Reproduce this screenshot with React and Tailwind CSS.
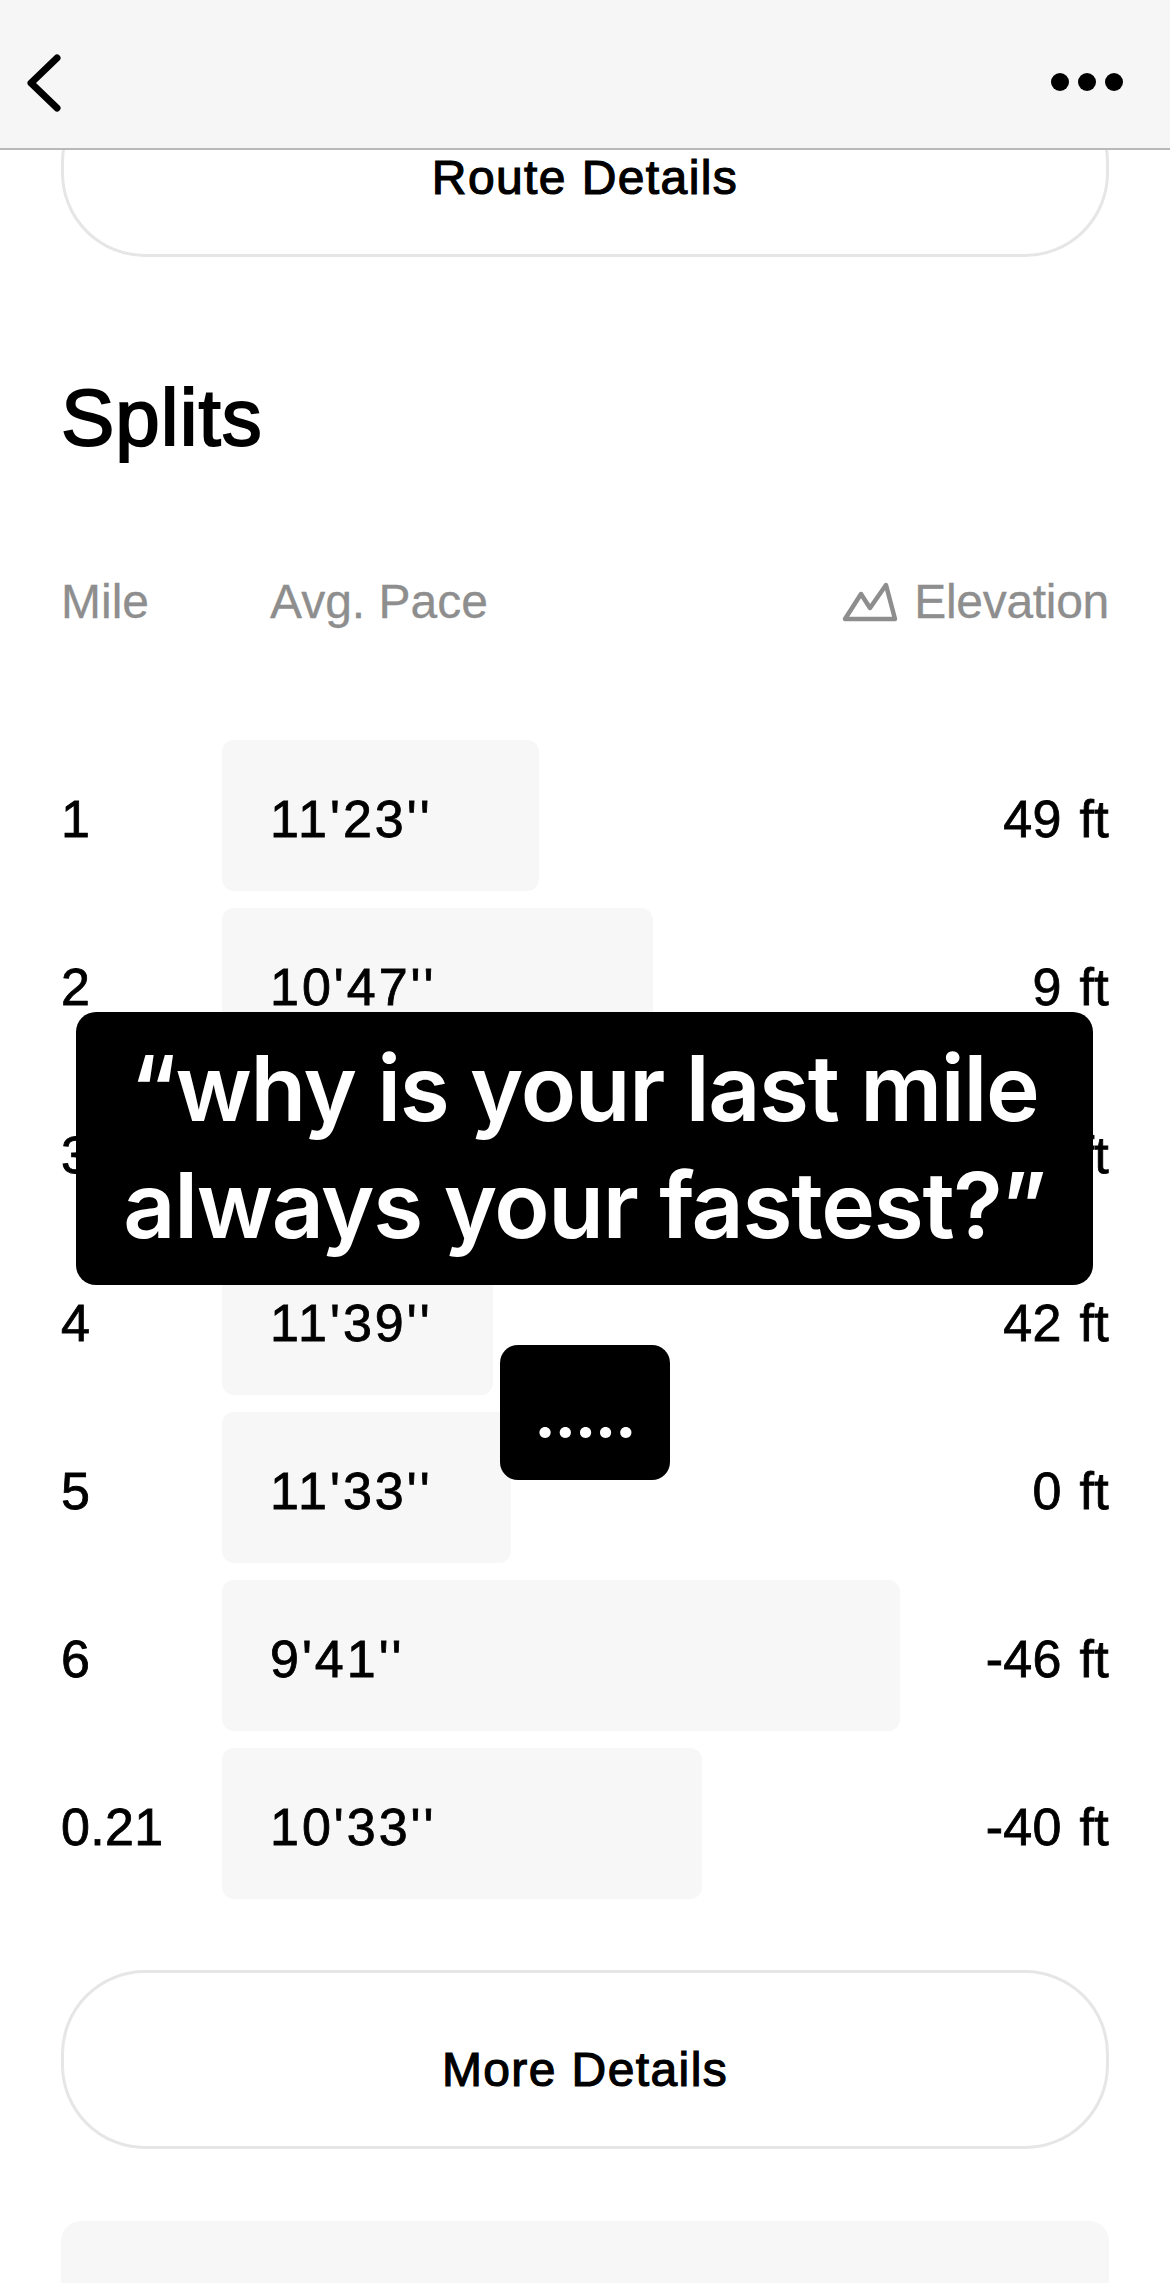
const rows = [
  { mile: '1', pace: "11'23''", elev: '49 ft', bar: 'w-[317px]' },
  { mile: '2', pace: "10'47''", elev: '9 ft', bar: 'w-[431px]' },
  { mile: '3', pace: "11'02''", elev: '18 ft', bar: 'w-[380px]' },
  { mile: '4', pace: "11'39''", elev: '42 ft', bar: 'w-[271px]' },
  { mile: '5', pace: "11'33''", elev: '0 ft', bar: 'w-[289px]' },
  { mile: '6', pace: "9'41''", elev: '-46 ft', bar: 'w-[678px]' },
  { mile: '0.21', pace: "10'33''", elev: '-40 ft', bar: 'w-[480px]' },
];

const PillButton = ({ label, className }) => (
  <button className={`flex h-[179px] w-full items-center justify-center rounded-[84px] border-[3px] border-[#e6e6e6] bg-white pt-5 text-[48px] tracking-[1.4px] text-black [-webkit-text-stroke:1.2px_#000] ${className}`}>
    {label}
  </button>
);

const App = () => {
  return (
    <div className="relative h-[2283px] w-[1170px] overflow-hidden bg-white font-['Liberation_Sans',Arial,sans-serif]">
      {/* top bar sits over the scrolled content */}
      <div className="absolute inset-x-0 top-0 z-10 flex h-[150px] items-start justify-between border-b-2 border-[#b9b9b9] bg-[#f6f6f6] pl-[27px] pr-[47px] pt-[54px]">
        <svg width="34" height="58" viewBox="0 0 34 58" fill="none" stroke="#000" strokeWidth="7" strokeLinecap="round" strokeLinejoin="round">
          <path d="M30 4 L4 29 L30 54" />
        </svg>
        <div className="mt-[19px] flex gap-[9px]">
          <span className="h-[18px] w-[18px] rounded-full bg-black" />
          <span className="h-[18px] w-[18px] rounded-full bg-black" />
          <span className="h-[18px] w-[18px] rounded-full bg-black" />
        </div>
      </div>

      <div className="px-[61px] pt-[78px]">
        <PillButton label="Route Details" />

        <h2 className="mt-[116px] text-[80px] leading-[90px] tracking-[1px] text-black [-webkit-text-stroke:2px_#000]">Splits</h2>

        <div className="mt-[114px] flex h-[50px] items-center text-[48px] text-[#8e8e8e] [-webkit-text-stroke:0.3px_#8e8e8e]">
          <span className="w-[209px]">Mile</span>
          <span>Avg. Pace</span>
          <span className="ml-auto flex items-center gap-[16px] tracking-[-0.3px]">
            <svg width="56" height="42" viewBox="0 0 56 42" fill="none" stroke="#8e8e8e" strokeWidth="4.5" strokeLinejoin="round" strokeLinecap="round">
              <path d="M3 38 L19 13 L28 27 L44 4 L53 38 Z" />
            </svg>
            Elevation
          </span>
        </div>

        <div className="mt-[113px] flex flex-col gap-[17px]">
          {rows.map((r) => (
            <div key={r.mile} className="relative flex h-[151px] items-center text-[52px] tracking-[0.3px] text-black [word-spacing:3px] [-webkit-text-stroke:0.8px_#000]">
              <span className="w-[161px] shrink-0 pt-[6px]">{r.mile}</span>
              <div className={`flex h-full items-center rounded-[12px] bg-[#f7f7f7] pl-[48px] pt-[6px] ${r.bar}`}>
                <span className="tracking-[3px]">{r.pace}</span>
              </div>
              <span className="ml-auto pt-[6px]">{r.elev}</span>
            </div>
          ))}
        </div>

        <PillButton label="More Details" className="mt-[71px]" />

        <div className="mt-[72px] h-[200px] rounded-[20px] bg-[#f7f7f7]" />
      </div>

      {/* caption overlays */}
      <div className="absolute left-[76px] top-[1012px] z-20 flex h-[273px] w-[1017px] flex-col items-center justify-center rounded-[20px] bg-black pb-[4px] font-['Inter',sans-serif] text-[91px] font-semibold leading-[117px] tracking-[-1.3px] text-white">
        <span>“why is your last mile</span>
        <span>always your fastest?”</span>
      </div>
      <div className="absolute left-[500px] top-[1345px] z-20 flex h-[135px] w-[170px] items-end justify-center rounded-[18px] bg-black pb-[34px] font-['Inter',sans-serif] text-[60px] font-extrabold leading-[62px] tracking-[-1px] text-white">
        .....
      </div>
    </div>
  );
};

export default App;
